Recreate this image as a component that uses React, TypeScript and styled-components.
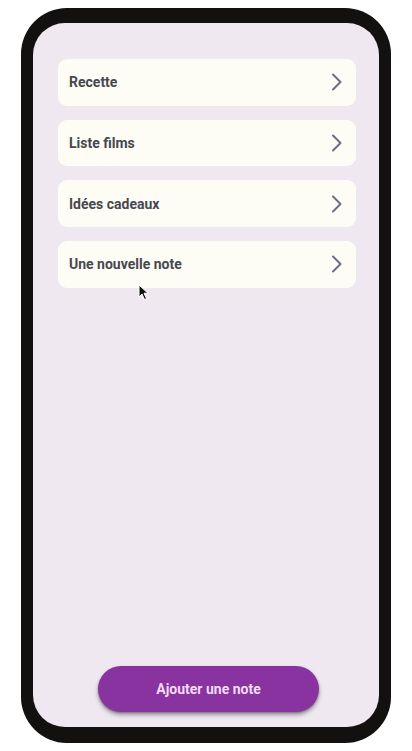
import React from "react";
import styled, { createGlobalStyle } from "styled-components";

const Global = createGlobalStyle`
  html, body { margin: 0; padding: 0; background: #ffffff; }
  body { font-family: Roboto, "Noto Sans", Arial, sans-serif; }
`;

const Page = styled.div`
  width: 412px;
  height: 751px;
  padding: 8px 0 0 21px;
  box-sizing: border-box;
  position: relative;
`;

const Frame = styled.div`
  width: 370px;
  height: 735px;
  box-sizing: border-box;
  padding: 15px 12px 16px 12px;
  background: #121110;
  border-radius: 46px;
  display: flex;
`;

const Screen = styled.div`
  flex: 1;
  background: #efe8f1;
  border-radius: 32px;
  display: flex;
  flex-direction: column;
  padding: 36px 23px 15px 25px;
  box-sizing: border-box;
`;

const List = styled.div`
  display: flex;
  flex-direction: column;
  gap: 14.2px;
`;

const Card = styled.div`
  height: 46.5px;
  background: #fdfdf6;
  border-radius: 9px;
  display: flex;
  align-items: center;
  justify-content: space-between;
  padding: 0 13px 0 11px;
  box-sizing: border-box;
`;

const Title = styled.span`
  font-family: Roboto, "Noto Sans", Arial, sans-serif;
  font-size: 14px;
  font-weight: 700;
  color: #47484f;
  letter-spacing: 0;
`;

const Spacer = styled.div`
  flex: 1;
`;

const Footer = styled.div`
  display: flex;
  justify-content: center;
  padding-left: 3px;
`;

const AddButton = styled.button`
  width: 221px;
  height: 46px;
  border: none;
  border-radius: 23px;
  background: #8833a0;
  color: #f3dcf3;
  font-family: Roboto, "Noto Sans", Arial, sans-serif;
  font-size: 14px;
  font-weight: 700;
  letter-spacing: 0;
  box-shadow: 0 3px 4px rgba(0, 0, 0, 0.35), 0 1px 2px rgba(0, 0, 0, 0.25);
  cursor: pointer;
`;

const Cursor = styled.svg`
  position: absolute;
  left: 138px;
  top: 284px;
  pointer-events: none;
`;

const Chevron = () => (
  <svg width="12" height="18" viewBox="0 0 12 18">
    <path d="M2 1.5 L9.5 9 L2 16.5" fill="none" stroke="#6b6e80" strokeWidth="2" strokeLinecap="round" strokeLinejoin="round" />
  </svg>
);

const notes = ["Recette", "Liste films", "Idées cadeaux", "Une nouvelle note"];

export default function App() {
  return (
    <>
      <Global />
      <Page>
        <Frame>
          <Screen>
            <List>
              {notes.map((n) => (
                <Card key={n}>
                  <Title>{n}</Title>
                  <Chevron />
                </Card>
              ))}
            </List>
            <Spacer />
            <Footer>
              <AddButton>Ajouter une note</AddButton>
            </Footer>
          </Screen>
        </Frame>
        <Cursor width="12" height="17" viewBox="0 0 12 17">
          <path d="M1 1 L1 13 L4 10 L6.5 15.5 L8.5 14.6 L6 9.2 L10 9.2 Z" fill="#111" stroke="#fff" strokeWidth="1" strokeLinejoin="round" />
        </Cursor>
      </Page>
    </>
  );
}
